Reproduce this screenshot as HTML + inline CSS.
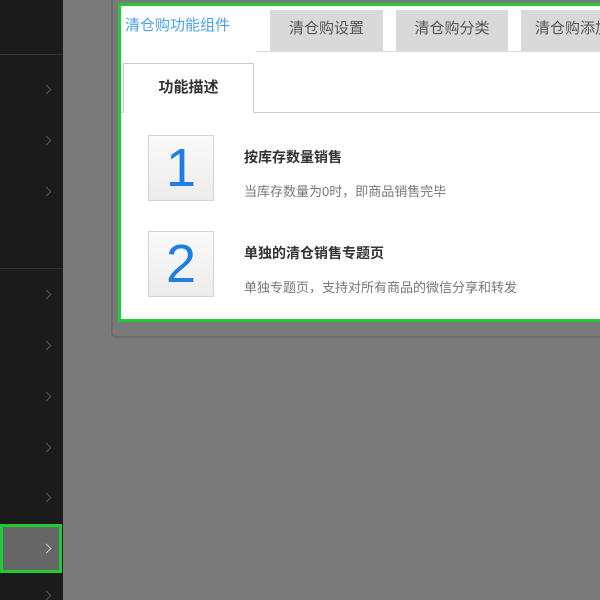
<!DOCTYPE html>
<html><head><meta charset="utf-8"><style>
*{margin:0;padding:0;box-sizing:border-box}
body{width:600px;height:600px;overflow:hidden;background:#7a7a7a;position:relative;font-family:"Liberation Sans","Noto Sans CJK SC",sans-serif}
.side{position:absolute;left:0;top:0;width:63px;height:600px;background:#1b1b1b}
.sep{position:absolute;left:0;width:63px;height:1px;background:#333}
.chev{position:absolute;left:43px;width:7px;height:7px;border-right:1.5px solid #555;border-top:1.5px solid #555;transform:rotate(45deg)}
.hl{position:absolute;left:0;top:524px;width:62px;height:49px;background:#666;border:3px solid #1fcc33}
.panel{position:absolute;left:111px;top:-5px;width:500px;height:343px;border:2px solid #6c6c6c;border-radius:5px;background:#7a7a7a}
.green{position:absolute;left:118px;top:3px;width:490px;height:319px;border:3px solid #1fcc33;background:#fff}
.tab{position:absolute;top:4px;height:42px;background:#d9d9d9;color:#555;font-size:15px;line-height:38px;text-align:center}
.t1{position:absolute;left:0;top:0;width:135px;height:45px;background:#fff;color:#4aa3e8;font-size:15px;line-height:40px;padding-left:4px}
.tabline{position:absolute;left:135px;top:45px;width:400px;height:1px;background:#ddd}
.sub{position:absolute;left:2px;top:57px;width:131px;height:50px;border:1px solid #ccc;border-bottom:none;background:#fff;font-size:15px;font-weight:bold;color:#333;text-align:center;line-height:48px;z-index:2}
.subline{position:absolute;left:0;top:106px;width:500px;height:1px;background:#ccc}
.num{position:absolute;left:27px;width:66px;height:66px;border:1px solid #d4d4d4;background:linear-gradient(#fafafa,#ececec);color:#1f7fe0;font-size:54px;text-align:center;line-height:64px}
.tt{position:absolute;left:123px;font-size:14px;font-weight:bold;color:#333}
.ds{position:absolute;left:123px;font-size:13px;color:#777}
</style></head><body>
<div class="side">
<div class="sep" style="top:54px"></div>
<div class="sep" style="top:268px"></div>
<div class="chev" style="top:86px"></div>
<div class="chev" style="top:137px"></div>
<div class="chev" style="top:188px"></div>
<div class="chev" style="top:291px"></div>
<div class="chev" style="top:342px"></div>
<div class="chev" style="top:393px"></div>
<div class="chev" style="top:444px"></div>
<div class="chev" style="top:494px"></div>
<div class="chev" style="top:592px"></div>
</div>
<div class="hl"><div class="chev" style="left:40px;top:18px;border-color:#ccc"></div></div>
<div class="panel"></div>
<div class="green">
<div class="t1">清仓购功能组件</div>
<div class="tab" style="left:149px;width:113px">清仓购设置</div>
<div class="tab" style="left:275px;width:112px">清仓购分类</div>
<div class="tab" style="left:400px;width:90px;text-align:left;padding-left:14px;white-space:nowrap;overflow:hidden">清仓购添加</div>
<div class="tabline"></div>
<div class="sub">功能描述</div>
<div class="subline"></div>
<div class="num" style="top:129px">1</div>
<div class="tt" style="top:141px">按库存数量销售</div>
<div class="ds" style="top:175px">当库存数量为0时，即商品销售完毕</div>
<div class="num" style="top:225px">2</div>
<div class="tt" style="top:237px">单独的清仓销售专题页</div>
<div class="ds" style="top:271px">单独专题页，支持对所有商品的微信分享和转发</div>
</div>
</body></html>
